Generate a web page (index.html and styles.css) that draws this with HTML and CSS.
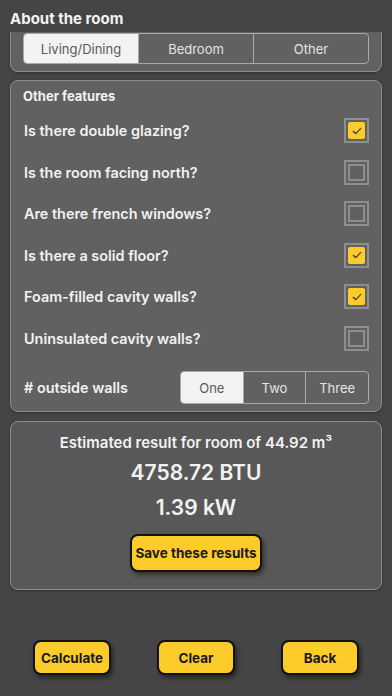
FILE: index.html
```html
<!DOCTYPE html>
<html lang="en">
<head>
    <meta charset="UTF-8">
    <meta name="viewport" content="width=device-width, initial-scale=1.0">
    <title>About the room</title>
    <link rel="stylesheet" href="styles.css">
</head>
<body>
    <div class="screen">
        <div class="page-title">About the room</div>

        <div class="card card-top">
            <div class="segmented">
                <div class="seg active">Living/Dining</div>
                <div class="seg">Bedroom</div>
                <div class="seg">Other</div>
            </div>
        </div>

        <div class="card features">
            <div class="card-title">Other features</div>
            <div class="row">
                <span>Is there double glazing?</span>
                <span class="check checked"><span class="box"><svg viewBox="0 0 16 16" width="12" height="12"><path d="M3 8.5 L6.5 11.5 L13 4.5" fill="none" stroke="#4a4a3a" stroke-width="1.8" stroke-linecap="round" stroke-linejoin="round"/></svg></span></span>
            </div>
            <div class="row">
                <span>Is the room facing north?</span>
                <span class="check"><span class="box"></span></span>
            </div>
            <div class="row">
                <span>Are there french windows?</span>
                <span class="check"><span class="box"></span></span>
            </div>
            <div class="row">
                <span>Is there a solid floor?</span>
                <span class="check checked"><span class="box"><svg viewBox="0 0 16 16" width="12" height="12"><path d="M3 8.5 L6.5 11.5 L13 4.5" fill="none" stroke="#4a4a3a" stroke-width="1.8" stroke-linecap="round" stroke-linejoin="round"/></svg></span></span>
            </div>
            <div class="row">
                <span>Foam-filled cavity walls?</span>
                <span class="check checked"><span class="box"><svg viewBox="0 0 16 16" width="12" height="12"><path d="M3 8.5 L6.5 11.5 L13 4.5" fill="none" stroke="#4a4a3a" stroke-width="1.8" stroke-linecap="round" stroke-linejoin="round"/></svg></span></span>
            </div>
            <div class="row">
                <span>Uninsulated cavity walls?</span>
                <span class="check"><span class="box"></span></span>
            </div>
            <div class="walls-row">
                <span>#&nbsp;outside walls</span>
                <div class="segmented small">
                    <div class="seg active">One</div>
                    <div class="seg">Two</div>
                    <div class="seg">Three</div>
                </div>
            </div>
        </div>

        <div class="card result">
            <div class="result-label">Estimated result for room of 44.92 m³</div>
            <div class="result-value">4758.72 BTU</div>
            <div class="result-value">1.39 kW</div>
            <button class="yellow-btn save-btn">Save these results</button>
        </div>

        <div class="actions">
            <button class="yellow-btn">Calculate</button>
            <button class="yellow-btn">Clear</button>
            <button class="yellow-btn">Back</button>
        </div>
    </div>
</body>
</html>
```

FILE: styles.css
```css
:root {
    --bg-color: #454545;
    --card-color: #616161;
    --card-border: #8c8c8c;
    --yellow: #fdcb2a;
}

* {
    box-sizing: border-box;
    margin: 0;
    padding: 0;
}

body {
    font-family: 'Inter', 'Liberation Sans', sans-serif;
    background: var(--bg-color);
    color: #f2f2f2;
}

.screen {
    width: 392px;
    height: 696px;
    overflow: hidden;
}

.page-title {
    height: 32px;
    padding: 9px 10px 0;
    font-size: 15px;
    font-weight: 700;
    line-height: 20px;
}

.card {
    margin: 0 10px;
    background: var(--card-color);
    border: 1.5px solid var(--card-border);
    border-radius: 8px;
    box-shadow: 0 1px 3px rgba(0, 0, 0, 0.3);
}

.card-top {
    height: 40px;
    border-top: none;
    border-radius: 0 0 8px 8px;
    padding: 1px 12px 0;
}

.segmented {
    display: flex;
    height: 31px;
    border: 1px solid #a9a9a9;
    border-radius: 4px;
    overflow: hidden;
}

.seg {
    flex: 1;
    display: flex;
    align-items: center;
    justify-content: center;
    font-size: 13px;
    font-weight: 400;
    color: #e4e4e4;
    border-left: 1px solid #a9a9a9;
}

.seg:first-child {
    border-left: none;
}

.seg.active {
    background: #f3f3f3;
    color: #5a5a5a;
}

.features {
    margin-top: 8px;
    height: 332px;
    padding: 6px 12px 0;
}

.card-title {
    font-size: 13px;
    font-weight: 700;
    line-height: 18px;
    margin-bottom: 5px;
}

.row {
    height: 41.5px;
    display: flex;
    align-items: center;
    justify-content: space-between;
    padding-left: 1px;
    font-size: 14.4px;
    font-weight: 600;
}

.check {
    width: 25px;
    height: 25px;
    border: 2px solid #8e8e8e;
    display: flex;
    align-items: center;
    justify-content: center;
}

.check .box {
    width: 17px;
    height: 17px;
    border: 2px solid #8e8e8e;
    display: flex;
    align-items: center;
    justify-content: center;
}

.check.checked .box {
    background: var(--yellow);
    border-color: var(--yellow);
    border-radius: 2px;
}

.walls-row {
    margin-top: 12px;
    display: flex;
    align-items: center;
    justify-content: space-between;
    padding-left: 1px;
    font-size: 14.4px;
    font-weight: 600;
}

.segmented.small {
    width: 189px;
    height: 33px;
}

.result {
    margin-top: 9px;
    height: 169px;
    background: #585858;
    display: flex;
    flex-direction: column;
    align-items: center;
    padding-top: 11px;
}

.result-label {
    font-size: 15px;
    font-weight: 600;
    line-height: 20px;
}

.result-value {
    font-size: 21px;
    font-weight: 600;
    line-height: 24px;
    margin-top: 8px;
}

.result-value + .result-value {
    margin-top: 11px;
}

.yellow-btn {
    font-family: inherit;
    background: var(--yellow);
    color: #1a1a1a;
    border: 2px solid #111;
    border-radius: 8px;
    font-size: 13.5px;
    font-weight: 700;
    box-shadow: 2px 3px 4px rgba(0, 0, 0, 0.45);
    cursor: pointer;
}

.save-btn {
    margin-top: 14px;
    width: 132px;
    height: 38px;
}

.actions {
    display: flex;
    justify-content: space-between;
    padding: 50px 33px 0;
}

.actions .yellow-btn {
    width: 78px;
    height: 35px;
}
```
